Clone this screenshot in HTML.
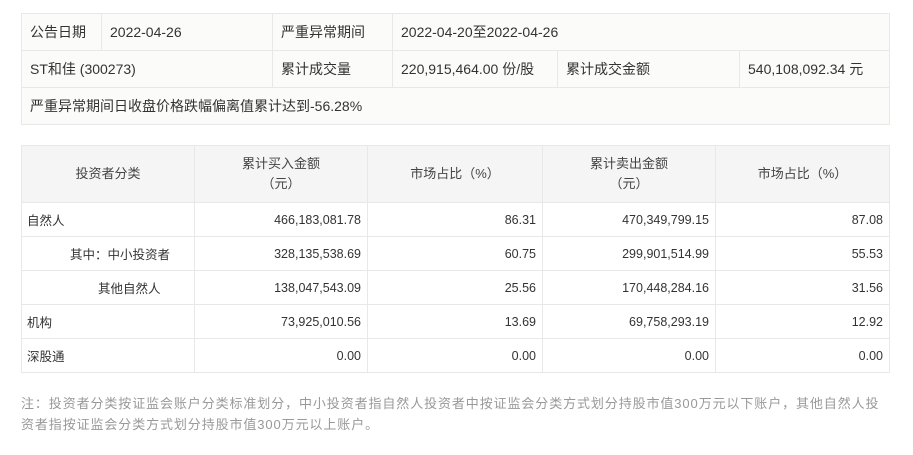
<!DOCTYPE html>
<html><head><meta charset="utf-8"><style>
body{margin:0;width:913px;height:455px;background:#fff;font-family:"Liberation Sans","Noto Sans CJK SC",sans-serif;color:#333;position:relative;overflow:hidden}
table{border-collapse:collapse;position:absolute;left:21px;table-layout:fixed}
td{border:1px solid #e8e8e8;padding:0 8px;white-space:nowrap}
#t1{top:13px;width:868px;background:#fbfbf9;font-size:14px}
#t1 td{height:36px}
#t2{top:145px;width:868px;font-size:12.5px}
#t2 th{background:#f5f5f5;border:1px solid #e8e8e8;font-weight:normal;height:56px;padding:0;line-height:20px;font-size:13px;color:#444}
#t2 td{height:33px;text-align:right;padding-right:6px}
#t2 td.l{text-align:left;padding-left:5px}
.note{position:absolute;left:21px;top:393px;width:890px;font-size:13px;line-height:21px;color:#999;letter-spacing:0.9px;white-space:nowrap}
</style></head><body>
<table id="t1">
<colgroup><col style="width:80px"><col style="width:171px"><col style="width:120px"><col style="width:165px"><col style="width:182px"><col style="width:150px"></colgroup>
<tr><td>公告日期</td><td>2022-04-26</td><td>严重异常期间</td><td colspan="3">2022-04-20至2022-04-26</td></tr>
<tr><td colspan="2">ST和佳 (300273)</td><td>累计成交量</td><td>220,915,464.00 份/股</td><td>累计成交金额</td><td>540,108,092.34 元</td></tr>
<tr><td colspan="6">严重异常期间日收盘价格跌幅偏离值累计达到-56.28%</td></tr>
</table>
<table id="t2">
<colgroup><col style="width:173px"><col style="width:173px"><col style="width:175px"><col style="width:173px"><col style="width:174px"></colgroup>
<tr><th>投资者分类</th><th>累计买入金额<br>（元）</th><th>市场占比（%）</th><th>累计卖出金额<br>（元）</th><th>市场占比（%）</th></tr>
<tr><td class="l">自然人</td><td>466,183,081.78</td><td>86.31</td><td>470,349,799.15</td><td>87.08</td></tr>
<tr><td class="l" style="padding-left:48px">其中：中小投资者</td><td>328,135,538.69</td><td>60.75</td><td>299,901,514.99</td><td>55.53</td></tr>
<tr><td class="l" style="padding-left:76px">其他自然人</td><td>138,047,543.09</td><td>25.56</td><td>170,448,284.16</td><td>31.56</td></tr>
<tr><td class="l">机构</td><td>73,925,010.56</td><td>13.69</td><td>69,758,293.19</td><td>12.92</td></tr>
<tr><td class="l">深股通</td><td>0.00</td><td>0.00</td><td>0.00</td><td>0.00</td></tr>
</table>
<div class="note">注：投资者分类按证监会账户分类标准划分，中小投资者指自然人投资者中按证监会分类方式划分持股市值300万元以下账户，其他自然人投<br>资者指按证监会分类方式划分持股市值300万元以上账户。</div>
</body></html>
